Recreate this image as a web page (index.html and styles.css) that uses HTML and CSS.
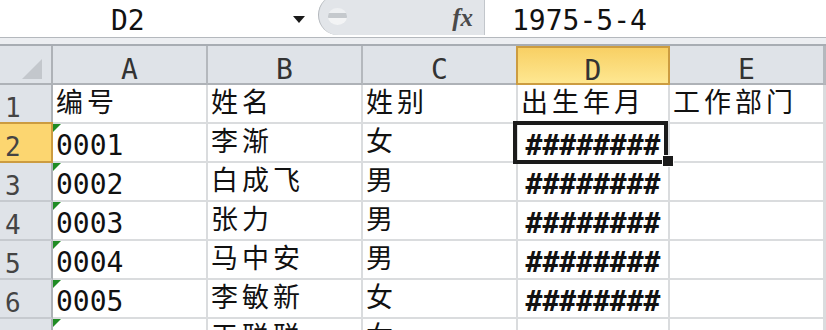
FILE: index.html
```html
<!DOCTYPE html>
<html lang="zh-CN">
<head>
  <meta charset="UTF-8">
  <meta name="viewport" content="width=device-width, initial-scale=1.0">
  <link rel="stylesheet" href="styles.css">
</head>
<body>

  <div class="formula-bar">
    <div class="name-box">
      <span class="name-text">D2</span>
      <span class="name-arrow"></span>
    </div>
    <div class="fx-area">
      <span class="knob"></span>
      <span class="fx">fx</span>
    </div>
    <div class="formula-input">1975-5-4</div>
  </div>
  <div class="bar-band"></div>

  <div class="sheet">
    <!-- column headers -->
    <div class="cell corner"></div>
    <div class="cell col-head">A</div>
    <div class="cell col-head">B</div>
    <div class="cell col-head">C</div>
    <div class="cell col-head active">D</div>
    <div class="cell col-head">E</div>
    <div class="cell col-head rest"></div>

    <!-- row 1 -->
    <div class="cell row-head">1</div>
    <div class="cell cjk">编号</div>
    <div class="cell cjk">姓名</div>
    <div class="cell cjk">姓别</div>
    <div class="cell cjk">出生年月</div>
    <div class="cell cjk">工作部门</div>
    <div class="cell rest"></div>

    <!-- row 2 -->
    <div class="cell row-head active">2</div>
    <div class="cell num flag">0001</div>
    <div class="cell cjk">李渐</div>
    <div class="cell cjk">女</div>
    <div class="cell hash selected">########<span class="sel-box"></span><span class="fill-handle"></span></div>
    <div class="cell"></div>
    <div class="cell rest"></div>

    <!-- row 3 -->
    <div class="cell row-head">3</div>
    <div class="cell num flag">0002</div>
    <div class="cell cjk">白成飞</div>
    <div class="cell cjk">男</div>
    <div class="cell hash">########</div>
    <div class="cell"></div>
    <div class="cell rest"></div>

    <!-- row 4 -->
    <div class="cell row-head">4</div>
    <div class="cell num flag">0003</div>
    <div class="cell cjk">张力</div>
    <div class="cell cjk">男</div>
    <div class="cell hash">########</div>
    <div class="cell"></div>
    <div class="cell rest"></div>

    <!-- row 5 -->
    <div class="cell row-head">5</div>
    <div class="cell num flag">0004</div>
    <div class="cell cjk">马中安</div>
    <div class="cell cjk">男</div>
    <div class="cell hash">########</div>
    <div class="cell"></div>
    <div class="cell rest"></div>

    <!-- row 6 -->
    <div class="cell row-head">6</div>
    <div class="cell num flag">0005</div>
    <div class="cell cjk">李敏新</div>
    <div class="cell cjk">女</div>
    <div class="cell hash">########</div>
    <div class="cell"></div>
    <div class="cell rest"></div>

    <!-- row 7, only its top edge is in view -->
    <div class="cell row-head"></div>
    <div class="cell num flag"></div>
    <div class="cell cjk">王聪聪</div>
    <div class="cell cjk">女</div>
    <div class="cell hash"></div>
    <div class="cell"></div>
    <div class="cell rest"></div>
  </div>

</body>
</html>
```

FILE: styles.css
```css
body {
  margin: 0;
  width: 826px;
  height: 330px;
  overflow: hidden;
  background-color: #fff;
  font-family: "DejaVu Sans Mono", "Noto Sans CJK SC", monospace;
  color: #111;
}

/* formula bar */
.formula-bar {
  display: flex;
  height: 37px;
  border-bottom: 1px solid #b4b8bd;
  overflow: hidden;
}

.name-box {
  width: 318px;
  display: flex;
  align-items: center;
  font-size: 28px;
  line-height: 1;
  padding-top: 4px;
  box-sizing: border-box;
}

.name-text {
  margin-left: 111px;
}

.name-arrow {
  margin-left: auto;
  margin-right: 13px;
  margin-top: -2px;
  border-left: 6px solid transparent;
  border-right: 6px solid transparent;
  border-top: 7px solid #1a1a1a;
}

.fx-area {
  width: 167px;
  height: 40px;
  margin-top: -5px;
  background-color: #e2e5e9;
  border-left: 1px solid #b3b7bc;
  border-right: 1px solid #c2c6cb;
  border-radius: 20px 0 0 20px;
  box-sizing: border-box;
  display: flex;
  align-items: center;
}

.knob {
  width: 19px;
  height: 17px;
  margin-left: 9px;
  margin-top: 3px;
  border-radius: 50%;
  background: linear-gradient(#eef0f2 0, #eef0f2 30%, #c5c9cd 32%, #c5c9cd 58%, #f3f4f5 60%);
}

.fx {
  margin-left: auto;
  margin-right: 11px;
  margin-top: 4px;
  font-family: "Liberation Serif", serif;
  font-style: italic;
  font-weight: bold;
  font-size: 25px;
  line-height: 1;
  color: #4a4a4a;
}

.formula-input {
  flex: 1;
  display: flex;
  align-items: center;
  padding-left: 27px;
  padding-top: 4px;
  font-size: 28px;
  line-height: 1;
}

.bar-band {
  height: 6px;
  background-color: #eceef1;
  border-bottom: 2px solid #a8adb3;
}

/* sheet grid */
.sheet {
  display: grid;
  grid-template-columns: 53px 155px 155px 155px 152px 155px 1fr;
  grid-auto-rows: 39px;
}

.cell {
  position: relative;
  display: flex;
  align-items: center;
  box-sizing: border-box;
  padding-left: 3px;
  border-right: 2px solid #dadcde;
  border-bottom: 2px solid #dadcde;
  white-space: nowrap;
  line-height: 1;
}

.corner,
.col-head,
.row-head {
  background-color: #dfe3e8;
  color: #333;
}

.corner {
  border-right-color: #aeb2b7;
  border-bottom-color: #aeb2b7;
}

.corner::after {
  content: "";
  position: absolute;
  right: 9px;
  bottom: 4px;
  border-left: 20px solid transparent;
  border-bottom: 20px solid #c3c7cc;
}

.col-head {
  justify-content: center;
  padding-left: 0;
  padding-top: 10px;
  font-size: 28px;
  border-right-color: #b4b8bd;
  border-bottom-color: #aeb2b7;
}

.col-head.active {
  background: linear-gradient(#f8d064, #fee791);
  border-top: 2px solid #cc9c40;
  border-right-color: #cc9c40;
  border-bottom-color: #cc9c40;
  box-shadow: -2px 0 0 #cc9c40;
}

.row-head {
  padding-left: 5px;
  padding-top: 9px;
  font-size: 26px;
  color: #444;
  border-right-color: #aeb2b7;
  border-bottom-color: #c6cacf;
}

.row-head.active {
  background-color: #fcd670;
  border-right-color: #cc9c40;
  border-bottom-color: #cc9c40;
  box-shadow: 0 -2px 0 #cc9c40;
}

.rest {
  padding-left: 0;
}

.cjk {
  font-family: "Noto Sans CJK SC", sans-serif;
  font-size: 27px;
  letter-spacing: 4px;
  padding-bottom: 6px;
}

.num {
  font-size: 28px;
  padding-top: 7px;
}

.hash {
  justify-content: center;
  padding-left: 0;
  padding-top: 7px;
  font-size: 28px;
  font-weight: bold;
}

/* text-stored-as-number marker */
.flag::before {
  content: "";
  position: absolute;
  top: 0;
  left: 0;
  border-top: 8px solid #1f8b24;
  border-right: 8px solid transparent;
}

/* active cell */
.selected {
  z-index: 2;
}

.sel-box {
  position: absolute;
  top: -3px;
  left: -5px;
  right: 0;
  bottom: -3px;
  border: 4px solid #1b1b1b;
}

.fill-handle {
  position: absolute;
  right: -6px;
  bottom: -6px;
  width: 10px;
  height: 10px;
  background-color: #1b1b1b;
  border: 1px solid #fff;
}
```
